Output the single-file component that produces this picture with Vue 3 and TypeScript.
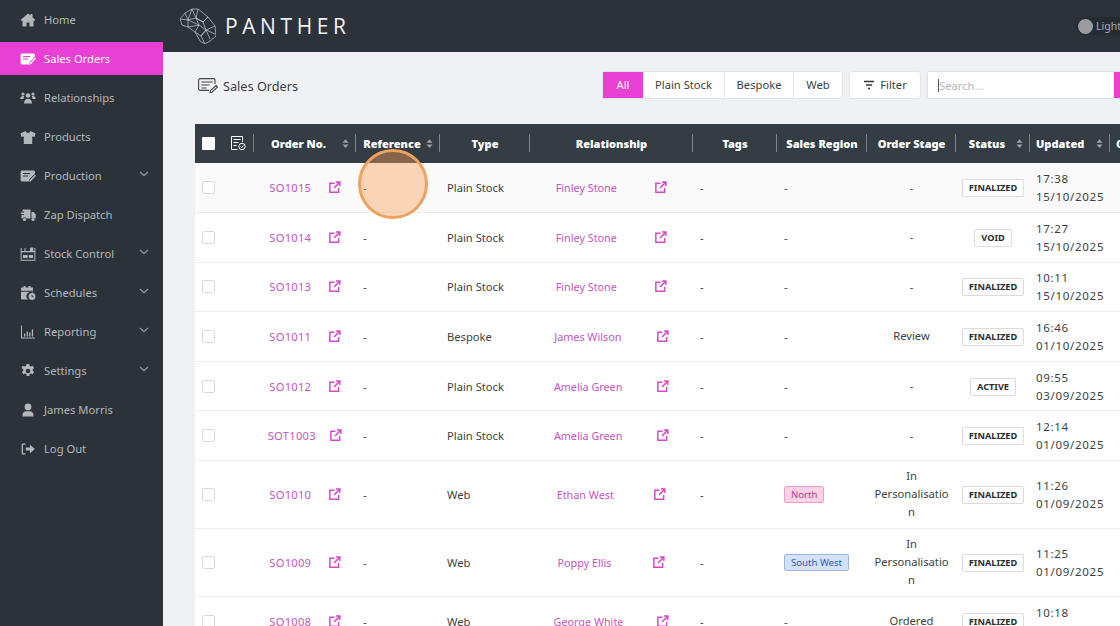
<script setup lang="ts">
interface Row {
  no: string; type: string; rel: string; region?: { label: string; cls: string }; stage: string[]; status: string; time: string; date: string; tall?: boolean
}
const menu = [
  { label: 'Home', icon: 'home' }, { label: 'Sales Orders', icon: 'order', active: true },
  { label: 'Relationships', icon: 'people' }, { label: 'Products', icon: 'shirt' },
  { label: 'Production', icon: 'order', caret: true }, { label: 'Zap Dispatch', icon: 'truck' },
  { label: 'Stock Control', icon: 'stock', caret: true }, { label: 'Schedules', icon: 'cal', caret: true },
  { label: 'Reporting', icon: 'chart', caret: true }, { label: 'Settings', icon: 'gear', caret: true },
  { label: 'James Morris', icon: 'user' }, { label: 'Log Out', icon: 'logout' },
]
const columns = [
  { label: 'Order No.', sort: true }, { label: 'Reference', sort: true }, { label: 'Type' }, { label: 'Relationship' },
  { label: 'Tags' }, { label: 'Sales Region' }, { label: 'Order Stage' }, { label: 'Status', sort: true }, { label: 'Updated', sort: true },
]
const north = { label: 'North', cls: 'north' }
const sw = { label: 'South West', cls: 'sw' }
const pers = ['In', 'Personalisatio', 'n']
const rows: Row[] = [
  { no: 'SO1015', type: 'Plain Stock', rel: 'Finley Stone', stage: ['-'], status: 'FINALIZED', time: '17:38', date: '15/10/2025' },
  { no: 'SO1014', type: 'Plain Stock', rel: 'Finley Stone', stage: ['-'], status: 'VOID', time: '17:27', date: '15/10/2025' },
  { no: 'SO1013', type: 'Plain Stock', rel: 'Finley Stone', stage: ['-'], status: 'FINALIZED', time: '10:11', date: '15/10/2025' },
  { no: 'SO1011', type: 'Bespoke', rel: 'James Wilson', stage: ['Review'], status: 'FINALIZED', time: '16:46', date: '01/10/2025' },
  { no: 'SO1012', type: 'Plain Stock', rel: 'Amelia Green', stage: ['-'], status: 'ACTIVE', time: '09:55', date: '03/09/2025' },
  { no: 'SOT1003', type: 'Plain Stock', rel: 'Amelia Green', stage: ['-'], status: 'FINALIZED', time: '12:14', date: '01/09/2025' },
  { no: 'SO1010', type: 'Web', rel: 'Ethan West', region: north, stage: pers, status: 'FINALIZED', time: '11:26', date: '01/09/2025', tall: true },
  { no: 'SO1009', type: 'Web', rel: 'Poppy Ellis', region: sw, stage: pers, status: 'FINALIZED', time: '11:25', date: '01/09/2025', tall: true },
  { no: 'SO1008', type: 'Web', rel: 'George White', stage: ['Ordered'], status: 'FINALIZED', time: '10:18', date: '01/09/2025' },
]
const tabs = ['All', 'Plain Stock', 'Bespoke', 'Web']
</script>

<template>
  <div class="app">
    <aside class="sidebar">
      <div v-for="m in menu" :key="m.label" class="item" :class="{ active: m.active }">
        <svg class="micon" viewBox="0 0 16 16" fill="currentColor">
          <path v-if="m.icon === 'home'" d="M8 1.5 .6 8l1 1.1L2.5 8.4V14.5h4v-4h3v4h4V8.4l.9.7 1-1.1L12.5 5.3V2h-2v1.5z" />
          <template v-else-if="m.icon === 'order'">
            <path d="M2 2.5h11.5c.8 0 1.4.6 1.4 1.4v1.800l-5.300 5.300-.7 2.500H2c-.8 0-1.400-.6-1.400-1.400V3.900C.6 3.100 1.200 2.500 2 2.500z" />
            <path d="M3 5.500h7M3 8h5" :stroke="m.active ? '#e83fd4' : '#2b323a'" stroke-width="1" />
            <path d="m15 6.800 1 1-5.200 5.400-1.600.5.5-1.700z" />
          </template>
          <template v-else-if="m.icon === 'people'">
            <circle cx="8" cy="5.500" r="2.300" /><circle cx="3" cy="4" r="1.600" /><circle cx="13" cy="4" r="1.600" />
            <path d="M4 13.500c0-3 1.600-4.800 4-4.800s4 1.800 4 4.800zM.3 9c0-2 1-2.900 2.700-2.900.5 0 .9.1 1.300.3L3.400 9zM15.700 9c0-2-1-2.900-2.700-2.900-.5 0-.9.1-1.300.3l.9 2.600z" />
          </template>
          <path v-else-if="m.icon === 'shirt'" d="M5.500 2 .5 4.500l1 3.500 2.300-.6V15h8.400V7.400l2.300.6 1-3.500L10.500 2C10 3.300 9.100 3.900 8 3.900S6 3.300 5.500 2z" />
          <template v-else-if="m.icon === 'truck'">
            <path d="M3 2.500h7.500v9H6.300a2 2 0 0 0-3.600 0H1.500V8H3.800V7H.8V5.600h3.400V4.400H2z" />
            <path d="M11.500 5h2.200l2 2.600v3.900h-.9a2 2 0 0 0-3.300 0z" />
            <circle cx="4.500" cy="12.500" r="1.600" /><circle cx="13" cy="12.500" r="1.600" />
          </template>
          <template v-else-if="m.icon === 'stock'">
            <path d="M.6 2v12.800h14.800V2h-1v3h-3.500V2h-1v3H5.500V2h-1v3H1.600V2zM1.600 6.200h12.800v7.500H1.600z" />
            <path d="M3 9h4.500v3H3zM8.800 9h4.200v3H8.800z" />
            <path d="M10.500 1.500h2.800V5h-2.800z" />
          </template>
          <template v-else-if="m.icon === 'cal'">
            <path d="M3.500 1h2v1.500h3V1h2v1.500H13v3.200H1V2.500h2.500zM1 6.800h12v1a4 4 0 0 0-4.800 6.700H2c-.6 0-1-.4-1-1z" />
            <circle cx="12" cy="11.500" r="3.400" /><path d="M12 9.800v1.900h1.500" stroke="#2b323a" fill="none" />
          </template>
          <path v-else-if="m.icon === 'chart'" d="M1 1.500h1v12h13v1H1zM4 9.500h1.300v3H4zM6.600 7.500h1.300v5H6.600zM9.200 8.500h1.300v4H9.200zM11.800 5.500h1.300v7h-1.300z" />
          <path v-else-if="m.icon === 'gear'" d="M6.700 1h2.600l.4 1.900 1.200.6 1.800-.8 1.400 2.300-1.400 1.300v1.400l1.400 1.300-1.400 2.300-1.800-.8-1.200.7-.4 1.800H6.700l-.4-1.800-1.200-.7-1.800.8-1.400-2.300 1.400-1.300V6.300L1.400 5l1.400-2.300 1.800.8 1.200-.6zM8 5.700a2.300 2.300 0 1 0 0 4.600 2.300 2.300 0 0 0 0-4.600z" fill-rule="evenodd" />
          <path v-else-if="m.icon === 'user'" d="M8 1.500a3.400 3.400 0 1 1 0 6.800 3.400 3.400 0 0 1 0-6.800zM2.500 14.500v-1.600c0-2.200 1.700-3.700 3.600-3.700h3.800c1.900 0 3.600 1.500 3.600 3.700v1.600z" />
          <path v-else-if="m.icon === 'logout'" d="M5.500 2.500v1.300H3v8.400h2.500v1.300H3c-.8 0-1.300-.5-1.300-1.300V3.800c0-.8.500-1.300 1.300-1.300zM10 3.800 14.800 8 10 12.200V9.500H5.800v-3H10z" />
        </svg>
        <span class="mlabel">{{ m.label }}</span>
        <svg v-if="m.caret" class="caret" viewBox="0 0 10 6" fill="none" stroke="currentColor" stroke-width="1.500"><path d="m1 1 4 3.500L9 1" /></svg>
      </div>
    </aside>

    <div class="right">
      <header class="topbar">
        <svg class="logo" viewBox="0 0 36 36" fill="none" stroke="#c9ccd0" stroke-width=".7" stroke-linejoin="round">
          <path d="M0 11 5 5l7-4h6l10 8 7 9 1 10-6 5-5 3-5-3-5-9-7-5-6-2z" />
          <path d="M5 5l3 7 4-11 4 9 2-9M8 12 0 11M8 12l8-2 7 4 5-5-5 5 3 8 9-4M16 10l7 4M26 22l9 4M26 22l4 9M26 22l-5 6 4 8M21 28l-6-4M21 28l5-6M15 24l4-7 7 5M19 17l-3-7M19 17l-11-5M8 19l11-2M8 12v7" />
        </svg>
        <span class="brand">PANTHER</span>
        <div class="theme"><span class="knob"></span><span class="tlabel">Light</span></div>
      </header>

      <main class="main">
        <div class="toolbar">
          <svg class="title-icon" viewBox="0 0 20 15" fill="none" stroke="#444" stroke-width="1.100">
            <path d="M17 6V2.200C17 1.300 16.300.6 15.400.6H2.100C1.200.6.6 1.300.6 2.200v8.600c0 .9.600 1.600 1.500 1.600H11" />
            <path d="M3.500 4h11M3.500 7h8M3.500 10h5M18 7.500l1.500 1.500-5.500 5.200-2 .4.500-2z" />
          </svg>
          <span class="title">Sales Orders</span>
          <div class="tabs">
            <button v-for="(t, i) in tabs" :key="t" class="tab" :class="{ on: i === 0 }">{{ t }}</button>
          </div>
          <button class="filter">
            <svg viewBox="0 0 12 10" width="12" height="10" fill="none" stroke="#333" stroke-width="1.300"><path d="M1 1.500h10M3 5h6M5 8.500h2" /></svg>
            Filter
          </button>
          <div class="search"><span class="cursor"></span><span class="ph">Search...</span><span class="go"></span></div>
        </div>

        <div class="table">
          <div class="head">
            <div class="hc c-check"><span class="hbox"></span></div>
            <div class="hc c-doc">
              <svg viewBox="0 0 16 16" width="16" height="16" fill="none" stroke="#fff" stroke-width="1">
                <path d="M7.500 14.500H1.500V1.500h11V7M3.500 4.500h7M3.500 7.500h5M3.500 10.500h3" /><circle cx="12" cy="11.500" r="3.200" /><path d="m10.700 11.500 1 1 1.600-1.800" />
              </svg>
            </div>
            <div v-for="(c, i) in columns" :key="c.label" class="hc" :class="'col-' + i">
              <span class="htext">{{ c.label }}</span>
              <svg v-if="c.sort" class="sort" viewBox="0 0 8 12" fill="#9aa0a6"><path d="M4 1 7.500 5h-7zM4 11 .5 7h7z" /></svg>
            </div>
            <div class="hc col-last"><span class="htext">Created</span></div>
          </div>
          <div v-for="(r, idx) in rows" :key="r.no" class="row" :class="{ tall: r.tall, first: idx === 0 }">
            <div class="c c-check"><span class="box"></span></div>
            <div class="c c-doc"></div>
            <div class="c col-0 spread">
              <a class="link num">{{ r.no }}</a>
              <svg class="ext" viewBox="0 0 14 14" fill="none" stroke="#d548c8" stroke-width="1.600"><path d="M7 2.500H2v9.500h9.500V7.500M8.500 1.200h4.300v4.300M12.500 1.500 6.500 7.500" /></svg>
            </div>
            <div class="c col-1">-</div>
            <div class="c col-2">{{ r.type }}</div>
            <div class="c col-3 spread">
              <a class="link name">{{ r.rel }}</a>
              <svg class="ext" viewBox="0 0 14 14" fill="none" stroke="#d548c8" stroke-width="1.600"><path d="M7 2.500H2v9.500h9.500V7.500M8.500 1.200h4.300v4.300M12.500 1.500 6.500 7.500" /></svg>
            </div>
            <div class="c col-4">-</div>
            <div class="c col-5">
              <span v-if="r.region" class="tag" :class="r.region.cls">{{ r.region.label }}</span>
              <template v-else>-</template>
            </div>
            <div class="c col-6 stage"><span v-for="s in r.stage" :key="s">{{ s }}</span></div>
            <div class="c col-7 center"><span class="status">{{ r.status }}</span></div>
            <div class="c col-8 time"><span>{{ r.time }}</span><span>{{ r.date }}</span></div>
            <div class="c col-last"></div>
          </div>
          <div class="ring"></div>
        </div>
      </main>
    </div>
  </div>
</template>

<style>
html, body { margin: 0; background: #f0f1f5; overflow: hidden; }
</style>

<style scoped>
.app { display: flex; width: 1120px; height: 626px; overflow: hidden; font-family: "Noto Sans", sans-serif; font-size: 11.2px; color: #3a3f45; }
.sidebar { width: 163px; flex: none; background: #2b323a; display: flex; flex-direction: column; padding-top: 3px; box-sizing: border-box; }
.item { height: 33px; box-sizing: border-box; padding: 0 0 0 20px; margin-bottom: 6px; display: flex; align-items: center; color: #b5b8bb; font-size: 11.2px; position: relative; }
.item.active { background: #e83fd4; color: #fff; }
.micon { width: 16px; height: 16px; flex: none; }
.mlabel { margin-left: 8px; }
.caret { width: 10px; height: 6px; position: absolute; left: 139px; top: 12px; color: #8a8f94; }
.right { flex: 1; min-width: 0; display: flex; flex-direction: column; }
.topbar { height: 52px; flex: none; background: #2b323a; display: flex; align-items: center; padding-left: 17px; position: relative; }
.logo { width: 36px; height: 36px; }
.brand { margin-left: 9px; font-family: "Open Sans", sans-serif; font-weight: 400; font-size: 21px; letter-spacing: 4.600px; color: #f2f3f4; }
.theme { position: absolute; left: 913px; top: 17px; height: 18px; width: 60px; display: flex; align-items: center; background: #252b32; border-radius: 9px; }
.knob { width: 15px; height: 15px; border-radius: 50%; background: #9a9c9f; margin-left: 2px; }
.tlabel { margin-left: 3px; font-size: 10.500px; color: #a8abae; }
.main { flex: 1; background: #f0f1f5; padding: 20px 0 0 32px; min-height: 0; }
.toolbar { display: flex; align-items: center; height: 26px; width: 963px; }
.title-icon { width: 20px; height: 15px; margin: 1px 0 0 3px; flex: none; }
.title { margin-left: 5px; padding-top: 2px; font-size: 12.700px; color: #3a3f45; white-space: nowrap; }
.tabs { margin-left: auto; display: flex; height: 26px; box-shadow: 0 0 2px rgba(0,0,0,.18); border-radius: 2px; }
.tab { border: 0; border-right: 1px solid #e7e8ec; background: #fff; font: inherit; color: #3a3f45; padding: 0 0 1px; white-space: nowrap; }
.tab:nth-child(1) { width: 40px; }
.tab:nth-child(2) { width: 82px; }
.tab:nth-child(3) { width: 69px; }
.tab:nth-child(4) { width: 48px; border-right: 0; }
.tab.on { background: #e83fd4; color: #fff; border-right: 0; }
.filter { margin-left: 8px; height: 26px; width: 70px; border: 0; background: #fff; box-shadow: 0 0 2px rgba(0,0,0,.18); border-radius: 2px; font: inherit; color: #3a3f45; display: flex; align-items: center; justify-content: center; gap: 5px; padding: 0 0 1px; }
.search { margin-left: 8px; width: 230px; flex: none; height: 26px; background: #fff; box-shadow: 0 0 2px rgba(0,0,0,.18); display: flex; align-items: center; position: relative; }
.cursor { width: 1px; height: 13px; background: #555; margin-left: 10px; }
.ph { color: #b5b7ba; }
.go { position: absolute; left: 186px; top: 0; bottom: 0; right: 0; background: #e83fd4; }
.table { margin-top: 26px; width: 1000px; position: relative; }
.head { display: flex; height: 39px; background: #343c44; color: #fff; }
.hc { position: relative; display: flex; align-items: center; justify-content: center; box-sizing: border-box; height: 39px; padding-bottom: 1px; font-weight: 900; font-size: 11px; }
.hc::after { content: ""; position: absolute; right: 0; top: 10px; height: 18px; width: 1px; background: #7d8388; }
.hc.c-check::after { display: none; }
.htext { white-space: nowrap; }
.hbox { width: 13px; height: 13px; background: #fff; border-radius: 1px; }
.sort { width: 7px; height: 11px; position: absolute; right: 7px; top: 14px; }
.c-check { width: 27px; flex: none; justify-content: center; }
.c-doc { width: 32px; flex: none; justify-content: flex-start; padding-left: 8px; }
.col-0 { width: 102px; flex: none; }
.col-1 { width: 84px; flex: none; }
.col-2 { width: 90px; flex: none; }
.col-3 { width: 163px; flex: none; }
.col-4 { width: 84px; flex: none; }
.col-5 { width: 90px; flex: none; }
.col-6 { width: 89px; flex: none; }
.col-7 { width: 74px; flex: none; }
.col-8 { width: 80px; flex: none; }
.col-last { width: 85px; flex: none; }
.col-1.hc .htext { margin-right: 12px; }
.col-0.hc .htext { margin-right: 13px; }
.col-7.hc .htext { margin-right: 12px; }
.col-8.hc { justify-content: flex-start; padding-left: 6px; }
.col-last.hc { justify-content: flex-start; padding-left: 6px; }
.row { display: flex; height: 49.600px; background: #fff; border-bottom: 1px solid #eceded; box-sizing: border-box; }
.row.first { height: 50px; background: #fafafa; }
.row.tall { height: 68px; }
.c { box-sizing: border-box; display: flex; align-items: center; padding: 0 7px; color: #3a3f45; font-size: 11.200px; }
.c-check.c { padding: 0; justify-content: center; }
.box { width: 13px; height: 13px; border: 1px solid #d9dadc; border-radius: 2px; background: #fff; box-sizing: border-box; }
.spread { justify-content: space-around; }
.link { color: #c455c0; white-space: nowrap; }
.num { letter-spacing: .25px; }
.name { font-size: 10.800px; }
.ext { width: 13px; height: 13px; flex: none; }
.tag { font-size: 9.600px; padding: 0 6px; height: 17px; line-height: 15px; border-radius: 2px; box-sizing: border-box; border: 1px solid; white-space: nowrap; }
.north { background: #fcd2e6; border-color: #eaa0c8; color: #b0408e; }
.sw { background: #d3e2fb; border-color: #9ab8e6; color: #2c5fa8; }
.stage { flex-direction: column; justify-content: center; text-align: center; line-height: 18px; white-space: nowrap; padding: 0; }
.center { justify-content: center; padding: 1px 0 0; }
.status { background: #fff; border: 1px solid #dcdcdc; border-radius: 2px; font-size: 9.200px; font-weight: 700; color: #2a2e33; padding: 0 6px; height: 18px; line-height: 16px; box-sizing: border-box; white-space: nowrap; }
.time { flex-direction: column; align-items: flex-start; justify-content: center; padding: 1px 0 0 6px; line-height: 18px; white-space: nowrap; font-size: 11.500px; letter-spacing: .7px; }
.ring { position: absolute; left: 163px; top: 25px; width: 70px; height: 70px; box-sizing: border-box; border-radius: 50%; background: rgba(250, 160, 90, .42); border: 3px solid #eea25f; }
</style>
